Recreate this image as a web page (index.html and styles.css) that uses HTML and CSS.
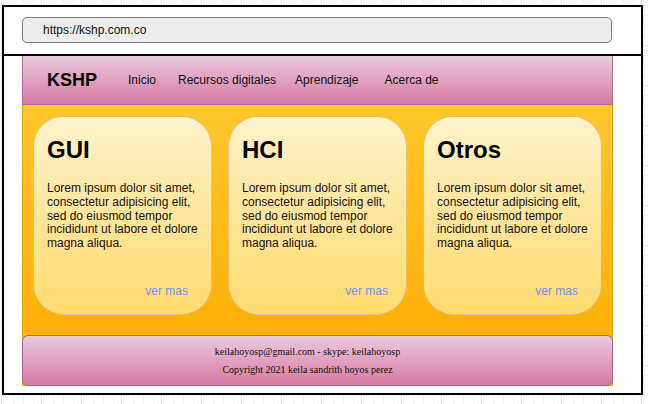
FILE: index.html
```html
<!DOCTYPE html>
<html lang="es">
<head>
<meta charset="utf-8">
<title>KSHP</title>
<link rel="stylesheet" href="styles.css">
</head>
<body>
<div class="window">
  <header class="browser-bar">
    <div class="url">https://kshp.com.co</div>
  </header>
  <div class="page">
    <nav class="nav">
      <span class="brand">KSHP</span>
      <a class="nav-link nav-inicio">Inicio</a>
      <a class="nav-link nav-recursos">Recursos digitales</a>
      <a class="nav-link nav-aprendizaje">Aprendizaje</a>
      <a class="nav-link nav-acerca">Acerca de</a>
    </nav>
    <main class="content">
      <section class="cards">
        <article class="card">
          <h2 class="card-title">GUI</h2>
          <p class="card-text">Lorem ipsum dolor sit amet, consectetur adipisicing elit, sed do eiusmod tempor incididunt ut labore et dolore magna aliqua.</p>
          <a class="more">ver mas</a>
        </article>
        <article class="card">
          <h2 class="card-title">HCI</h2>
          <p class="card-text">Lorem ipsum dolor sit amet, consectetur adipisicing elit, sed do eiusmod tempor incididunt ut labore et dolore magna aliqua.</p>
          <a class="more more-tight">ver mas</a>
        </article>
        <article class="card">
          <h2 class="card-title">Otros</h2>
          <p class="card-text">Lorem ipsum dolor sit amet, consectetur adipisicing elit, sed do eiusmod tempor incididunt ut labore et dolore magna aliqua.</p>
          <a class="more">ver mas</a>
        </article>
      </section>
      <footer class="footer">
        <p class="footer-line">keilahoyosp@gmail.com - skype: keilahoyosp</p>
        <p class="footer-line">Copyright 2021 keila sandrith hoyos perez</p>
      </footer>
    </main>
  </div>
</div>
</body>
</html>
```
FILE: styles.css
```css
* { box-sizing: border-box; }

html, body {
  margin: 0;
  padding: 0;
}

body {
  width: 648px;
  height: 404px;
  overflow: hidden;
  background-color: #ffffff;
  background-image:
    linear-gradient(to right, #e4e4e4 1px, transparent 1px),
    linear-gradient(to bottom, #e4e4e4 1px, transparent 1px),
    linear-gradient(to right, #f3f3f3 1px, transparent 1px),
    linear-gradient(to bottom, #f3f3f3 1px, transparent 1px);
  background-size: 40px 40px, 40px 40px, 10px 10px, 10px 10px;
  background-position: 1px 5px, 1px 5px, 3px 5px, 3px 5px;
  font-family: "Liberation Sans", Arial, sans-serif;
  padding: 5px 0 0 2px;
}

.window {
  width: 641px;
  height: 390px;
  border: 2px solid #000;
  background: #fff;
}

.browser-bar {
  height: 49px;
  border-bottom: 2px solid #000;
  padding: 10px 29px 0 18px;
}

.url {
  height: 26px;
  border: 1.5px solid #7b7b7b;
  border-radius: 5px;
  background: #ededed;
  display: flex;
  align-items: center;
  padding-left: 20px;
  font-size: 12px;
  color: #111;
}

.page {
  margin-left: 18px;
  width: 591px;
}

.nav {
  height: 49px;
  display: flex;
  align-items: center;
  padding-left: 24px;
  background: linear-gradient(to bottom, #e9cadb, #d779a0);
  border: 1px solid #b36a95;
  border-top: none;
  color: #111;
}

.brand {
  font-size: 18px;
  font-weight: bold;
  color: #000;
}

.nav-link {
  font-size: 12px;
  color: #111;
  text-decoration: none;
}

.nav-inicio { margin-left: 31px; }
.nav-recursos { margin-left: 22px; }
.nav-aprendizaje { margin-left: 19px; }
.nav-acerca { margin-left: 26px; }

.content {
  height: 281px;
  display: flex;
  flex-direction: column;
  padding-top: 11px;
  background: linear-gradient(to bottom, #ffc72b, #ffaa00);
  border-left: 1px solid #dba10f;
  border-right: 1px solid #dba10f;
}

.cards {
  display: flex;
  gap: 16px;
  padding: 0 10px;
}

.card {
  width: 179px;
  height: 199px;
  border-radius: 30px;
  border: 1px solid rgba(196, 146, 40, 0.45);
  background: linear-gradient(to bottom, #fff2cb, #ffda6e);
  padding: 19px 6px 16px 13px;
  display: flex;
  flex-direction: column;
}

.card-title {
  margin: 0;
  font-size: 24px;
  font-weight: bold;
  line-height: 27px;
  color: #000;
}

.card-text {
  margin: 19px 0 0 0;
  font-size: 12px;
  line-height: 13.8px;
  color: #1a1010;
}

.more {
  margin-top: auto;
  align-self: flex-end;
  margin-right: 17px;
  font-size: 12px;
  line-height: 14px;
  color: #6f95ee;
}

.more-tight { margin-right: 12px; }

.footer {
  margin-top: 20px;
  height: 51px;
  margin-left: -1px;
  margin-right: -1px;
  border: 1px solid #a9648f;
  border-radius: 6px;
  background: linear-gradient(to bottom, #e9cadb, #d779a0);
  display: flex;
  flex-direction: column;
  justify-content: center;
  align-items: center;
  gap: 6px;
  padding-right: 20px;
  font-family: "Liberation Serif", "Times New Roman", serif;
  font-size: 10px;
  color: #111;
}

.footer-line {
  margin: 0;
  line-height: 12px;
}
```
